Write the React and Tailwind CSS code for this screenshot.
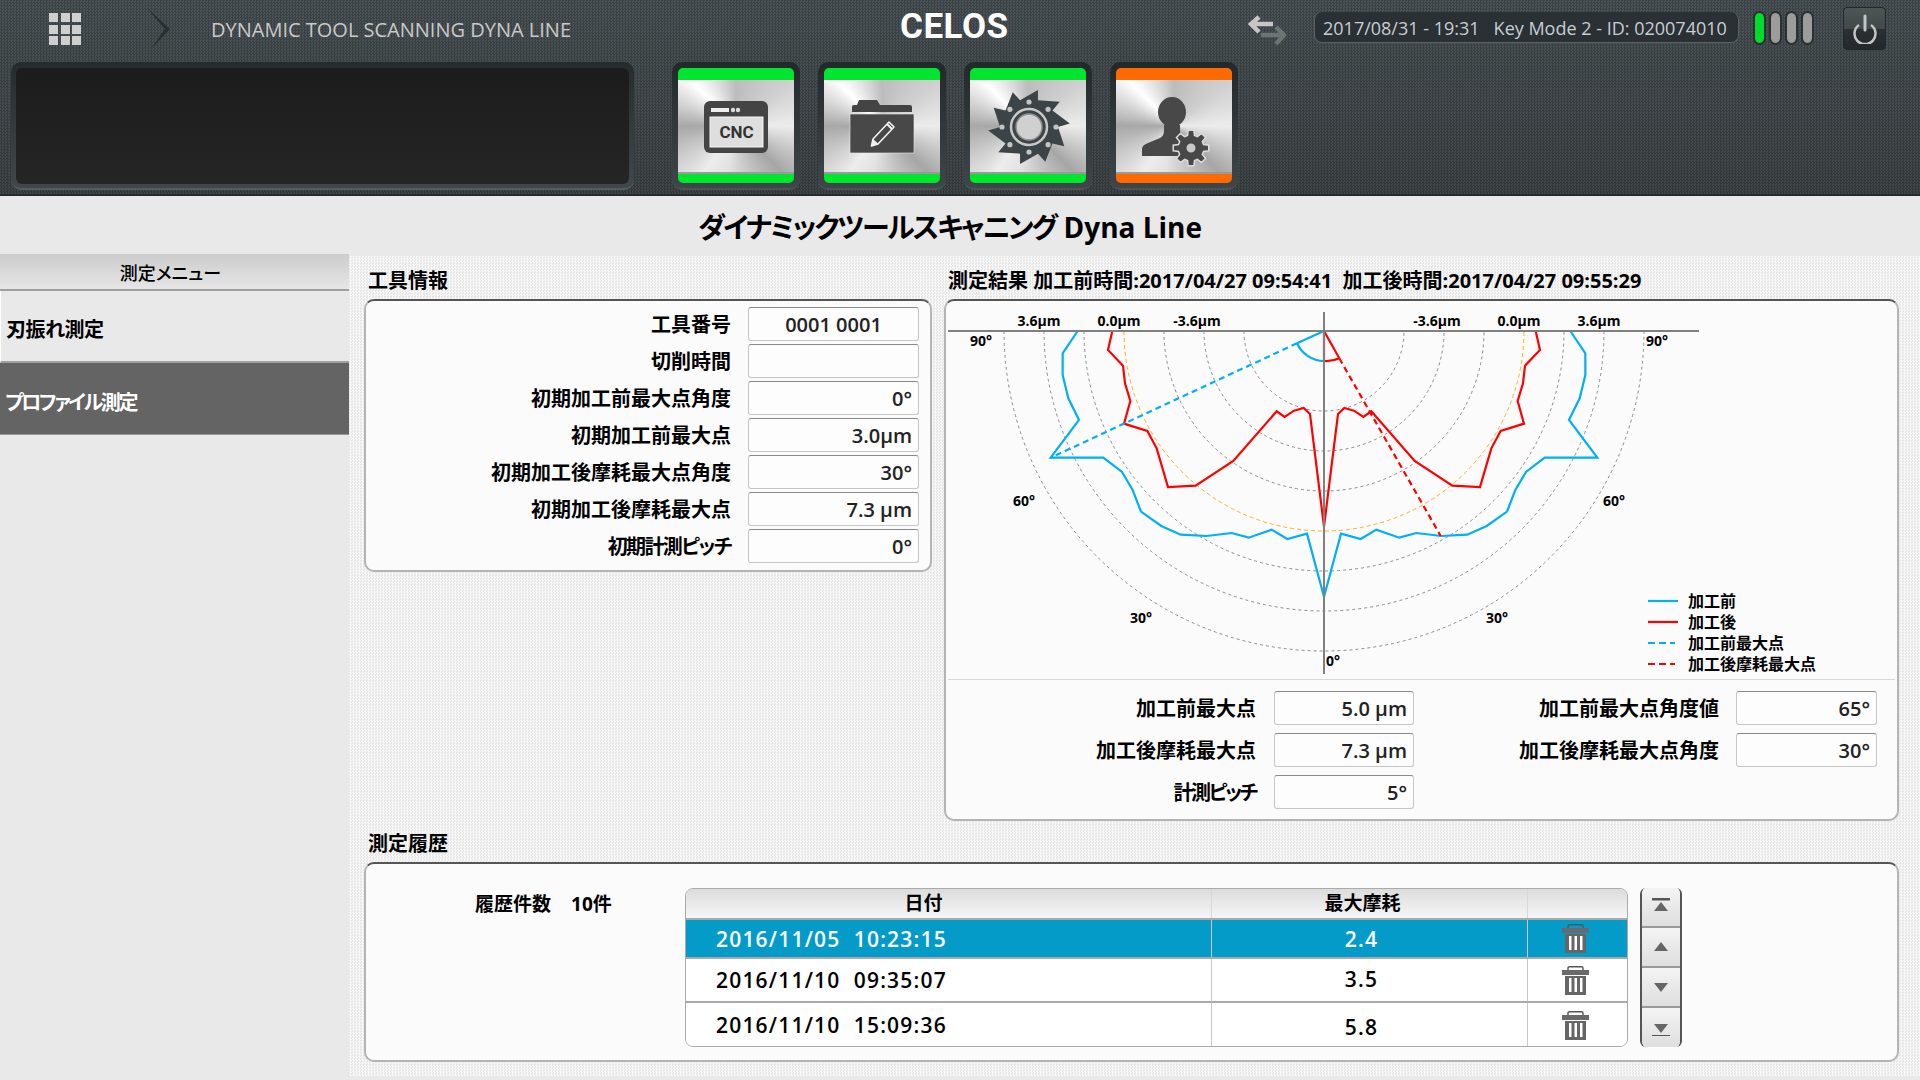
import React from "react";

const P = (X, Y) => [940 + X / 3, 290 + Y / 3];
const mirror = (pts) => [...pts, ...pts.slice(0, -1).reverse().map(([X, Y]) => [2304 - X, Y])];
const toLine = (pts) => pts.map(([X, Y]) => P(X, Y).join(",")).join(" ");

const blue = mirror([[413, 123], [368, 190], [368, 255], [385, 325], [417, 390], [332, 503], [490, 503], [546, 546], [578, 600], [603, 665], [664, 708], [722, 734], [800, 738], [875, 729], [926, 743], [995, 719], [1042, 747], [1101, 731], [1152, 920]]);
const red = mirror([[517, 123], [504, 180], [549, 227], [555, 280], [571, 333], [552, 401], [622, 423], [650, 475], [684, 591], [767, 587], [880, 513], [1010, 364], [1034, 381], [1062, 362], [1091, 354], [1110, 372], [1152, 710]]);

const radii = [80, 120, 160, 240, 280, 320];

const chartText = [
  ["3.6µm", 1039, 326], ["0.0µm", 1119, 326], ["-3.6µm", 1197, 326],
  ["-3.6µm", 1437, 326], ["0.0µm", 1519, 326], ["3.6µm", 1599, 326],
  ["90°", 981, 346], ["90°", 1657, 346], ["60°", 1024, 506], ["60°", 1614, 506],
  ["30°", 1141, 623], ["30°", 1497, 623], ["0°", 1333, 666],
];

const legend = [
  ["加工前", 601, "#00b0f0", undefined],
  ["加工後", 622, "#ff0000", undefined],
  ["加工前最大点", 643, "#00b0f0", "7 4"],
  ["加工後摩耗最大点", 664, "#ff0000", "7 4"],
];

const toolRows = [
  ["工具番号", "0001 0001", "text-center", ""],
  ["切削時間", "", "text-right", ""],
  ["初期加工前最大点角度", "0°", "text-right", ""],
  ["初期加工前最大点", "3.0µm", "text-right", ""],
  ["初期加工後摩耗最大点角度", "30°", "text-right", ""],
  ["初期加工後摩耗最大点", "7.3 µm", "text-right", ""],
  ["初期計測ピッチ", "0°", "text-right", "tracking-[-1.600px]"],
];

const history = [
  { date: "2016/11/05  10:23:15", wear: "2.4", active: true, rowClass: "h-[39px]", wearClass: "pt-[2px]" },
  { date: "2016/11/10  09:35:07", wear: "3.5", rowClass: "h-[44px]", wearClass: "" },
  { date: "2016/11/10  15:09:36", wear: "5.8", rowClass: "h-[44px]", wearClass: "pt-[6px]" },
];

const teeth = (() => {
  const pts = [];
  const n = 10;
  for (let i = 0; i < n; i++) {
    const a = (i / n) * Math.PI * 2;
    const b = ((i + 0.85) / n) * Math.PI * 2;
    pts.push([59 + 29 * Math.cos(a), 47 + 28 * Math.sin(a)].join(","));
    pts.push([59 + 41 * Math.cos(b), 47 + 38 * Math.sin(b)].join(","));
  }
  return pts.join(" ");
})();

const gearPoints = (() => {
  const pts = [];
  const n = 8;
  for (let i = 0; i < n; i++) {
    const c = (i / n) * Math.PI * 2;
    [[-0.27, 13], [-0.16, 18], [0.16, 18], [0.27, 13]].forEach(([d, r]) => {
      pts.push([75 + r * Math.cos(c + d), 68 + r * Math.sin(c + d)].join(","));
    });
  }
  return pts.join(" ");
})();

const Field = ({ value, align = "text-right", className = "" }) => (
  <div className={`h-[34px] rounded-[3px] border border-[#c6c6c6] border-t-[#8a8a8a] bg-[#fdfdfd] px-[6px] text-[20px] leading-[33px] font-semibold text-[#222] ${align} ${className}`}>
    {value}
  </div>
);

const Card = ({ className = "", children }) => (
  <div className={`rounded-[10px] border-2 border-[#b4b4b4] border-t-[#555] bg-[#fbfbfb] ${className}`}>{children}</div>
);

const CncIcon = () => (
  <svg width="116" height="94" viewBox="0 0 116 94">
    <rect x="26" y="21" width="64" height="52" rx="6" fill="#444" />
    <rect x="33" y="28" width="18" height="4" fill="#eee" />
    <circle cx="55" cy="30" r="2.2" fill="#ddd" />
    <circle cx="60" cy="30" r="2.2" fill="#ddd" />
    <rect x="32" y="37" width="53" height="30" fill="#dedede" stroke="#f4f4f4" />
    <text x="58.5" y="58" textAnchor="middle" fontSize="17" fontWeight="700" fontFamily="Roboto, sans-serif" fill="#333">CNC</text>
  </svg>
);

const FolderIcon = () => (
  <svg width="116" height="94" viewBox="0 0 116 94">
    <path d="M28 32v-5q0-2 2-2h3l2-5h18l3 5h30q2 0 2 2v5z" fill="#444" />
    <rect x="26" y="34" width="64" height="39" fill="#484848" stroke="#eee" strokeWidth="0.6" />
    <path d="M47.500 66l1.500-7 16-17 5 5-16 17z" fill="#484848" stroke="#f2f2f2" strokeWidth="1.600" strokeLinejoin="round" />
    <path d="M63 44l5 5" stroke="#f2f2f2" strokeWidth="2" />
    <path d="M47.500 66l1.500-7 5.500 5z" fill="#f2f2f2" />
  </svg>
);

const SawIcon = () => (
  <svg width="116" height="94" viewBox="0 0 116 94">
    <polygon points={teeth} fill="#3d4447" />
    {[0, 45, 90, 135, 180, 225, 270, 315].map((d) => (
      <circle key={d} cx={59 + 27 * Math.cos((d * Math.PI) / 180)} cy={47 + 25 * Math.sin((d * Math.PI) / 180)} r="2.6" fill="#c4c4c4" />
    ))}
    <circle cx="59" cy="47" r="18" fill="none" stroke="#c8c8c8" strokeWidth="2.5" />
    <circle cx="59" cy="47" r="13" fill="#d0d0d0" stroke="#8d9193" strokeWidth="1.5" />
  </svg>
);

const UserGearIcon = () => (
  <svg width="116" height="94" viewBox="0 0 116 94">
    <ellipse cx="56" cy="32" rx="14" ry="15" fill="#484848" />
    <path d="M26 76v-7q0-4 6-6l12-5q4-2 4-7v-6h16v6q0 3 4 6v19z" fill="#484848" />
    <polygon points={gearPoints} fill="#484848" stroke="#dcdcdc" strokeWidth="1.5" />
    <circle cx="75" cy="68" r="5.5" fill="#c9c9c9" stroke="#484848" strokeWidth="2" />
  </svg>
);

const menuButtons = [
  { band: "bg-[#00e52e]", Icon: CncIcon },
  { band: "bg-[#00e52e]", Icon: FolderIcon },
  { band: "bg-[#00e52e]", Icon: SawIcon },
  { band: "bg-[#ff6a00]", Icon: UserGearIcon },
];

const TrashIcon = () => (
  <svg width="27" height="29" viewBox="0 0 27 29">
    <path d="M6 4V2q0-1.200 1.500-1.200h12q1.500 0 1.500 1.200v2" fill="none" stroke="#555" strokeWidth="1.400" />
    <rect x="0" y="4" width="27" height="5" fill="#6a6a6a" />
    <rect x="3" y="10" width="21" height="19" fill="#666" />
    <rect x="7" y="12" width="2.500" height="14" fill="#fff" />
    <rect x="12.500" y="12" width="2.500" height="14" fill="#fff" />
    <rect x="18" y="12" width="2.500" height="14" fill="#fff" />
  </svg>
);

const ScrollButton = ({ down, bar, className = "" }) => (
  <div className={`flex items-center justify-center bg-[linear-gradient(#f4f4f4,#dedede)] ${className}`}>
    <svg width="20" height="20" viewBox="0 0 20 20">
      {down ? <polygon points="3,6 17,6 10,15" fill="#666" /> : <polygon points="10,5 17,14 3,14" fill="#666" />}
      {bar && <rect x="1" y={down ? 17 : 1} width="18" height={down ? 1 : 2.500} fill="#555" />}
    </svg>
  </div>
);

export default function App() {
  return (
    <div className="w-[1920px] h-[1080px] overflow-hidden flex flex-col bg-[#e9e9e9] font-['Open_Sans','Noto_Sans_CJK_JP',sans-serif] text-black [font-feature-settings:'palt']">
      <header className="h-[196px] shrink-0 border-b-2 border-[#25292b] bg-[repeating-conic-gradient(#00000024_0_25%,#ffffff0a_0_50%),linear-gradient(#454d50,#393f42)] bg-[length:3px_3px,100%_100%]">
        <div className="h-[62px] flex items-start">
          <div className="mt-[13px] ml-[49px] grid grid-cols-3 gap-[2.500px]">
            {Array.from({ length: 9 }).map((_, i) => (
              <div key={i} className="size-[9px] bg-[#cfcfcf]" />
            ))}
          </div>
          <svg className="mt-[8px] ml-[66px]" width="24" height="42" viewBox="0 0 24 42">
            <polygon points="0,0 23,21 4,41 18,21" fill="#282d2f" />
          </svg>
          <div className="mt-[16px] ml-[40px] w-[689px] text-[20px] leading-[28px] text-[#c9c9c9] whitespace-nowrap">DYNAMIC TOOL SCANNING DYNA LINE</div>
          <div className="mt-[9px] w-[348px] font-['Roboto',sans-serif] text-[35px] leading-none font-bold tracking-[0.5px] text-white">CELOS</div>
          <svg className="mt-[15px]" width="38" height="30" viewBox="0 0 38 30" fill="none" strokeWidth="4.500">
            <path d="M13 18h23M28 10l8 8-8 9" transform="translate(0 2)" stroke="#6d7273" />
            <path d="M25 9H3M11 2L3 9l8 8" stroke="#c6c6c6" />
          </svg>
          <div className="mt-[12px] ml-[28px] w-[425px] h-[31px] rounded-[8px] border-b border-x border-[#596164] bg-[#2a3033] pl-[8px] text-[18px] leading-[33px] text-[#c6ced6] whitespace-pre">2017/08/31 - 19:31   Key Mode 2 - ID: 020074010</div>
          <div className="mt-[11px] ml-[14px] flex gap-[3px]">
            {[0, 1, 2, 3].map((i) => (
              <div key={i} className="w-[13px] h-[34px] rounded-full border-[2px] border-[#2b3133] overflow-hidden">
                <div className={`h-full rounded-full ${i === 0 ? "bg-[#00dc2c]" : "bg-[#9c9c9c]"}`} />
              </div>
            ))}
          </div>
          <div className="mt-[7px] ml-[29px] w-[43px] h-[43px] rounded-[4px] border border-[#21272a] bg-[linear-gradient(#4d5557_0,#43494b_50%,#2a3033_50%,#22282b_100%)] flex items-center justify-center">
            <svg width="26" height="30" viewBox="0 0 26 30" fill="none" stroke="#c4c4c4" strokeWidth="2.500">
              <path d="M7 11a10.500 10.500 0 1 0 12 0" />
              <path d="M13 2v14" strokeWidth="3" strokeLinecap="round" />
            </svg>
          </div>
        </div>
        <div className="flex pl-[11px]">
          <div className="w-[623px] h-[128px] rounded-[10px] bg-[linear-gradient(#262c2e,#41484b)] border-b-2 border-[#565d60] px-[5px] pt-[6px]">
            <div className="h-[116px] rounded-[6px] bg-[linear-gradient(#1c1c1c,#252525)]" />
          </div>
          <div className="ml-[38px] flex gap-[18px]">
            {menuButtons.map(({ band, Icon }, i) => (
              <div key={i} className="w-[128px] h-[128px] rounded-[10px] bg-[linear-gradient(#23292b,#3f4649)] border-b-2 border-[#4c5356] px-[6px] pt-[6px]">
                <div className="h-[115px] rounded-[5px] overflow-hidden flex flex-col">
                  <div className={`h-[12px] ${band}`} />
                  <div className="h-[94px] border-b-2 border-[#9a9a9a] bg-[conic-gradient(#bcbcbc_0deg,#cfcfcf_50deg,#ececec_90deg,#a6a6a6_135deg,#e2e2e2_190deg,#ededed_215deg,#a8a8a8_270deg,#ffffff_315deg,#bcbcbc_360deg)]">
                    <Icon />
                  </div>
                  <div className={`flex-1 ${band}`} />
                </div>
              </div>
            ))}
          </div>
        </div>
      </header>

      <div className="h-[58px] shrink-0 flex items-center justify-center text-[28px] font-bold pt-[4px] pr-[20px] whitespace-pre">
        <span className="tracking-[-2px]">ダイナミックツールスキャニング</span> Dyna Line
      </div>

      <div className="flex-1 flex min-h-0">
        <aside className="w-[349px] shrink-0">
          <div className="h-[37px] border-b-2 border-[#a0a0a0] bg-[linear-gradient(#cccccc,#e6e6e6)] pr-[8px] text-center text-[18px] leading-[38px] font-medium">測定メニュー</div>
          <div className="h-[72px] border-l border-b-2 border-l-white border-b-[#a0a0a0] pl-[5px] pt-[8px] flex items-center text-[20px] font-bold tracking-[-0.500px]">刃振れ測定</div>
          <div className="h-[72px] bg-[#646464] border-b border-[#999] pl-[5px] pt-[8px] flex items-center text-[20px] font-bold text-white tracking-[-2.400px]">プロファイル測定</div>
        </aside>

        <main className="w-[1571px] h-[820px] mt-[2px] pl-[15px] bg-[repeating-conic-gradient(#f7f7f7_0_25%,#e6e6e6_0_50%)] bg-[length:3px_3px]">
          <div className="flex gap-[12px]">
            <section className="w-[568px]">
              <h2 className="h-[43px] pl-[4px] pt-[10px] text-[20px] leading-[30px] font-bold">工具情報</h2>
              <Card className="h-[273px] pt-[6px]">
                <div className="flex flex-col gap-[3px]">
                  {toolRows.map(([label, value, align, labelClass]) => (
                    <div key={label} className="flex items-center">
                      <div className={`w-[365px] pt-[2px] text-right text-[20px] font-bold whitespace-nowrap ${labelClass}`}>{label}</div>
                      <Field value={value} align={align} className="ml-[17px] w-[171px]" />
                    </div>
                  ))}
                </div>
              </Card>
            </section>

            <section className="w-[955px]">
              <h2 className="h-[43px] pl-[4px] pt-[10px] text-[20px] leading-[30px] font-bold whitespace-pre">測定結果 加工前時間:2017/04/27 09:54:41  加工後時間:2017/04/27 09:55:29</h2>
              <Card className="h-[522px]">
                <svg className="block" width="950" height="378" viewBox="946 301 950 378">
                  {radii.map((r) => (
                    <path key={r} d={`M${1324 - r} 331A${r} ${r} 0 0 0 ${1324 + r} 331`} fill="none" stroke="#8c8c8c" strokeWidth="1" strokeDasharray="3 3" />
                  ))}
                  <path d="M1124 331A200 200 0 0 0 1524 331" fill="none" stroke="#ffb020" strokeWidth="1" strokeDasharray="4 3" />
                  <polyline points={toLine(blue)} fill="none" stroke="#00b0f0" strokeWidth="2.200" />
                  <polyline points={toLine(red)} fill="none" stroke="#ff0000" strokeWidth="2.200" />
                  <path d="M1324 331L1297 343.300" stroke="#00b0f0" strokeWidth="2.200" />
                  <path d="M1297 343.300L1050.700 457.700" stroke="#00b0f0" strokeWidth="2.200" strokeDasharray="6 4" />
                  <path d="M1297 343.300A30 30 0 0 0 1324 361" fill="none" stroke="#00b0f0" strokeWidth="2.200" />
                  <path d="M1324 331L1339.300 358.300" stroke="#ff0000" strokeWidth="2.200" />
                  <path d="M1339.300 358.300L1440.700 536" stroke="#ff0000" strokeWidth="2.200" strokeDasharray="6 4" />
                  <path d="M1324 331V361A30 30 0 0 0 1339.300 358.300" fill="none" stroke="#ff0000" strokeWidth="2.200" />
                  <path d="M948 331H1699M1324 312V674" stroke="#808080" strokeWidth="2" fill="none" />
                  {chartText.map(([t, x, y], i) => (
                    <text key={i} x={x} y={y} textAnchor="middle" fontSize="14" fontWeight="700" fill="#000">{t}</text>
                  ))}
                  {legend.map(([t, y, c, dash]) => (
                    <g key={t}>
                      <path d={`M1648 ${y}H${dash ? 1675 : 1678}`} stroke={c} strokeWidth="2.200" strokeDasharray={dash} />
                      <text x="1688" y={y + 6} fontSize="16" fontWeight="700" fill="#000">{t}</text>
                    </g>
                  ))}
                </svg>
                <div className="mx-[2px] border-t border-[#d8d8d8] pt-[11px] flex flex-col gap-[8px]">
                  <div className="flex items-center">
                    <div className="w-[308px] pt-[2px] text-right text-[20px] font-bold">加工前最大点</div>
                    <Field value="5.0 µm" className="ml-[18px] w-[140px]" />
                    <div className="w-[305px] pt-[2px] text-right text-[20px] font-bold">加工前最大点角度値</div>
                    <Field value="65°" className="ml-[17px] w-[141px]" />
                  </div>
                  <div className="flex items-center">
                    <div className="w-[308px] pt-[2px] text-right text-[20px] font-bold">加工後摩耗最大点</div>
                    <Field value="7.3 µm" className="ml-[18px] w-[140px]" />
                    <div className="w-[305px] pt-[2px] text-right text-[20px] font-bold">加工後摩耗最大点角度</div>
                    <Field value="30°" className="ml-[17px] w-[141px]" />
                  </div>
                  <div className="flex items-center">
                    <div className="w-[308px] pt-[2px] text-right text-[20px] font-bold tracking-[-2.400px]">計測ピッチ</div>
                    <Field value="5°" className="ml-[18px] w-[140px]" />
                  </div>
                </div>
              </Card>
            </section>
          </div>

          <h2 className="h-[41px] pl-[4px] pt-[8px] text-[20px] leading-[30px] font-bold">測定履歴</h2>
          <Card className="w-[1535px] h-[200px] pt-[24px] flex">
            <div className="w-[319px] pl-[109px] pt-[3px] text-[19px] leading-[27px] font-bold flex gap-[20px] items-start">
              <span>履歴件数</span>
              <span>10件</span>
            </div>
            <div className="w-[943px] h-[159px] rounded-[8px] border border-[#aaa] overflow-hidden bg-white">
              <div className="h-[31px] border-b-2 border-[#aaa] bg-[linear-gradient(#dcdcdc,#f6f6f6)] grid grid-cols-[526px_316px_1fr] text-[19px] leading-[28px] font-bold text-center">
                <div className="border-r border-[#d8d8d8] pr-[50px]">日付</div>
                <div className="border-r border-[#d8d8d8] pr-[14px]">最大摩耗</div>
                <div />
              </div>
              {history.map((row) => (
                <div key={row.date} className={`${row.rowClass} grid grid-cols-[526px_316px_1fr] border-b-2 last:border-b-0 border-[#aaa] text-[21px] font-semibold tracking-[1.200px] ${row.active ? "bg-[#049bc9] text-white" : "bg-white text-black"}`}>
                  <div className="border-r border-[#c8c8c8] pl-[30px] pt-[2px] flex items-center whitespace-pre">{row.date}</div>
                  <div className={`border-r border-[#c8c8c8] pr-[16px] flex items-center justify-center ${row.wearClass}`}>{row.wear}</div>
                  <div className="flex items-center justify-center pr-[4px]"><TrashIcon /></div>
                </div>
              ))}
            </div>
            <div className="ml-[12px] w-[42px] h-[159px] rounded-[6px] border-x-2 border-[#555] overflow-hidden flex flex-col">
              <ScrollButton bar className="h-[40px] border-b-2 border-[#999]" />
              <ScrollButton className="h-[40px] border-b-2 border-[#999]" />
              <ScrollButton down className="h-[40px] border-b-2 border-[#999]" />
              <ScrollButton down bar className="flex-1" />
            </div>
          </Card>
        </main>
      </div>
    </div>
  );
}
